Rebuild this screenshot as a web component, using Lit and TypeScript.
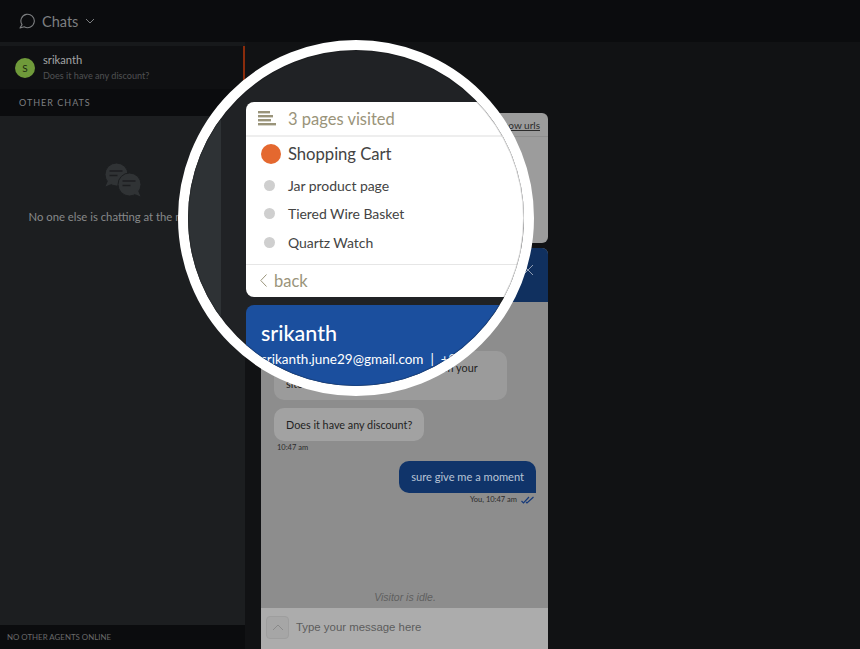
import { LitElement, html, css, svg } from "lit";
import { customElement } from "lit/decorators.js";

const chatGlyph = (cx: number, cy: number, flip: boolean) => svg`
  <circle cx=${cx} cy=${cy} r="11.5" fill="#303335" stroke="#1c1e20" stroke-width="1"></circle>
  <path d=${flip
    ? `M${cx + 4} ${cy + 9} L${cx + 11} ${cy + 12} L${cx + 8} ${cy + 5} Z`
    : `M${cx - 4} ${cy + 9} L${cx - 11} ${cy + 12} L${cx - 8} ${cy + 5} Z`} fill="#303335"></path>
  <path d="M${cx - 7} ${cy - 3.5} H${cx + 6} M${cx - 7} ${cy + 1} H${cx + 1}" stroke="#1c1e20" stroke-width="1.6"></path>
`;

@customElement("app-root")
export class AppRoot extends LitElement {
  static styles = css`
    :host {
      display: block;
      position: relative;
      width: 860px;
      height: 649px;
      overflow: hidden;
      background: #111214;
      font-family: "Lato", "Open Sans", sans-serif;
      color: #444;
    }
    .page { display: flex; flex-direction: column; height: 100%; }
    .top {
      height: 42px; flex: none; background: #0b0c0e;
      display: flex; align-items: center; padding-left: 19px; gap: 7px;
      color: #7d7f81; font-size: 14.5px;
    }
    .top svg { display: block; }
    .body { flex: 1; display: flex; min-height: 0; }
    .side { width: 245px; flex: none; display: flex; flex-direction: column; background: #1c1e20; }
    .strip { height: 4px; background: #17191b; }
    .active {
      height: 43px; box-sizing: border-box; background: #0f1012;
      border-right: 2px solid #8a2c0c;
      display: flex; align-items: center; gap: 8px; padding-left: 15px;
    }
    .avatar {
      width: 20px; height: 20px; border-radius: 50%; background: #6f9a3a;
      color: #1d2a10; font-size: 10px; display: flex; align-items: center; justify-content: center;
    }
    .who { display: flex; flex-direction: column; gap: 2px; }
    .name { font-size: 11.2px; line-height: 14px; color: #a3a4a5; }
    .preview { font-size: 9.1px; line-height: 13px; color: #4f5153; }
    .other {
      height: 27px; background: #0b0c0e; display: flex; align-items: center; padding-left: 19px;
      font-size: 9px; letter-spacing: 1px; color: #7d7f81;
    }
    .empty {
      flex: 1; display: flex; flex-direction: column; align-items: center; padding-top: 46px; gap: 12px;
      font-size: 11.3px; color: #87898a;
    }
    .agents {
      height: 24px; background: #0b0c0e; display: flex; align-items: center; padding-left: 7px;
      font-size: 7.9px; color: #69696a;
    }
    .main {
      flex: 1; padding: 71px 0 0 16px; display: flex; flex-direction: column; gap: 5px; min-width: 0;
    }
    .visited {
      width: 287px; height: 130px; flex: none; background: #9c9c9c; border-radius: 6px;
      box-sizing: border-box;
    }
    .visited-head {
      height: 23px; border-bottom: 1px solid #8f8f8f; display: flex; justify-content: flex-end;
      align-items: center; padding-right: 8px;
    }
    .urls { font-size: 10px; color: #2b2b2b; text-decoration: underline; }
    .win { width: 287px; flex: 1; display: flex; flex-direction: column; min-height: 0; background: #8d8d8d; border-radius: 6px 6px 0 0; overflow: hidden; }
    .win-head { height: 54px; flex: none; background: #10305f; display: flex; justify-content: flex-end; padding: 16px 14px 0 0; box-sizing: border-box; }
    .msgs { flex: 1; display: flex; flex-direction: column; padding: 49px 12px 4px 13px; min-height: 0; }
    .bubble {
      box-sizing: border-box; background: #a2a2a2; border-radius: 10px; padding: 8.5px 12px;
      font-size: 10.8px; line-height: 16px; color: #1f1f1f; width: fit-content;
    }
    .bubble.wide { width: 233px; background: #9b9b9b; margin-bottom: 8px; }
    .bubble.wide span { display: block; white-space: nowrap; }
    .time { font-size: 7.5px; line-height: 14px; color: #2c2c2c; padding-left: 3px; margin-bottom: 6px; }
    .bubble.me {
      align-self: flex-end; background: #10346a; color: #b9c4d6; border-bottom-right-radius: 0;
      font-size: 11.1px; padding: 8px 12px;
    }
    .sent { align-self: flex-end; display: flex; align-items: center; gap: 4px; font-size: 7.5px; line-height: 14px; color: #2c2c2c; padding-right: 2px; }
    .idle { margin-top: auto; text-align: center; font: italic 10.5px "Liberation Sans", sans-serif; color: #5f5f5f; line-height: 14px; }
    .input { height: 41px; flex: none; background: #acacac; display: flex; align-items: center; gap: 7px; padding-left: 5px; font: 11.4px "Liberation Sans", sans-serif; color: #5c5c5c; padding-bottom: 3px; box-sizing: border-box; }
    .up { width: 23px; height: 23px; box-sizing: border-box; border: 1px solid #9e9e9e; border-radius: 4px; background: #a6a6a6; display: flex; align-items: center; justify-content: center; }

    .lens {
      position: absolute; left: 178px; top: 40px; width: 356px; height: 356px; box-sizing: border-box;
      border: 10px solid #fff; border-radius: 50%; overflow: hidden; background: #202225;
      display: flex;
    }
    .lens::after {
      content: ""; position: absolute; inset: 0; border-radius: 50%;
      box-shadow: inset 0 0 0 1px rgba(0, 0, 0, 0.14);
    }
    .lens-side { width: 33px; flex: none; background: #2e3235; }
    .lens-main { flex: none; width: 400px; padding: 52px 0 0 25px; display: flex; flex-direction: column; gap: 8px; }
    .card { background: #fff; border-radius: 8px; height: 195px; flex: none; display: flex; flex-direction: column; }
    .card-head { height: 35px; flex: none; box-sizing: border-box; border-bottom: 2px solid #eee; display: flex; align-items: center; gap: 12px; padding-left: 12px; color: #9a947a; font-size: 16.5px; }
    .rows { flex: 1; display: flex; flex-direction: column; padding-top: 2px; }
    .row { display: flex; align-items: center; height: 28.5px; padding-left: 18px; gap: 13px; font-size: 14px; letter-spacing: -0.05px; color: #444; }
    .row i { width: 11px; height: 11px; border-radius: 50%; background: #cfcfcf; flex: none; }
    .row.now { height: 29px; padding-left: 15px; gap: 7px; font-size: 16.7px; margin-bottom: 3px; }
    .row.now i { width: 20px; height: 20px; background: #e4682f; }
    .card-foot { height: 33px; flex: none; box-sizing: border-box; border-top: 1px solid #e6e6e6; display: flex; align-items: center; gap: 7px; padding-left: 14px; padding-bottom: 1px; color: #9a947a; font-size: 16.5px; }
    .visitor { background: #1b4f9e; border-radius: 8px 8px 0 0; flex: 1; padding: 13px 15px; color: #fff; }
    .visitor-name { font-size: 21.5px; line-height: 30px; font-weight: 500; }
    .visitor-mail { font-size: 13.5px; line-height: 22px; white-space: nowrap; }
  `;

  render() {
    return html`
      <div class="page">
        <div class="top">
          <svg width="16" height="16" viewBox="0 0 16 16" fill="none" stroke="#7d7f81" stroke-width="1.1">
            <path d="M1 15 L3 11.6 A6.7 6.7 0 1 1 5.2 13.7 Z" stroke-linejoin="round"></path>
          </svg>
          <span>Chats</span>
          <svg width="10" height="6" viewBox="0 0 10 6" fill="none" stroke="#7d7f81" stroke-width="1"><path d="M1 1 L5 5 L9 1"></path></svg>
        </div>
        <div class="body">
          <aside class="side">
            <div class="strip"></div>
            <div class="active">
              <div class="avatar">S</div>
              <div class="who">
                <span class="name">srikanth</span>
                <span class="preview">Does it have any discount?</span>
              </div>
            </div>
            <div class="other">OTHER CHATS</div>
            <div class="empty">
              <svg width="38" height="36" viewBox="0 0 38 36">
                ${chatGlyph(12.5, 12.5, false)}
                ${chatGlyph(25.5, 22.5, true)}
              </svg>
              <span>No one else is chatting at the moment</span>
            </div>
            <div class="agents">NO OTHER AGENTS ONLINE</div>
          </aside>
          <main class="main">
            <section class="visited">
              <div class="visited-head"><span class="urls">show urls</span></div>
            </section>
            <section class="win">
              <div class="win-head">
                <svg width="12" height="12" viewBox="0 0 12 12" stroke="#8f9db3" stroke-width="1"><path d="M1 1 L11 11 M11 1 L1 11"></path></svg>
              </div>
              <div class="msgs">
                <div class="bubble wide"><span>Hi, I want to buy a product I saw on your</span><span>site.</span></div>
                <div class="bubble">Does it have any discount?</div>
                <div class="time">10:47 am</div>
                <div class="bubble me">sure give me a moment</div>
                <div class="sent">
                  <span>You, 10:47 am</span>
                  <svg width="13" height="8" viewBox="0 0 13 8" fill="none" stroke="#163a7a" stroke-width="1.2"><path d="M0.5 5 L2.5 7 L8 1 M5 6 L6 7 L12.5 1"></path></svg>
                </div>
                <div class="idle">Visitor is idle.</div>
              </div>
              <div class="input">
                <div class="up"><svg width="12" height="7" viewBox="0 0 12 7" fill="none" stroke="#8a8a8a" stroke-width="1"><path d="M1 6 L6 1 L11 6"></path></svg></div>
                <span>Type your message here</span>
              </div>
            </section>
          </main>
        </div>
      </div>

      <div class="lens">
        <div class="lens-side"></div>
        <div class="lens-main">
          <div class="card">
            <div class="card-head">
              <svg width="18" height="15" viewBox="0 0 18 15" fill="#9a947a"><rect x="0" y="0" width="12" height="2.4"></rect><rect x="0" y="4" width="15" height="2.4"></rect><rect x="0" y="8" width="13" height="2.4"></rect><rect x="0" y="12" width="18" height="2.4"></rect></svg>
              <span>3 pages visited</span>
            </div>
            <div class="rows">
              <div class="row now"><i></i><span>Shopping Cart</span></div>
              <div class="row"><i></i><span>Jar product page</span></div>
              <div class="row"><i></i><span>Tiered Wire Basket</span></div>
              <div class="row"><i></i><span>Quartz Watch</span></div>
            </div>
            <div class="card-foot">
              <svg width="7" height="13" viewBox="0 0 7 13" fill="none" stroke="#9a947a" stroke-width="1"><path d="M6.5 0.5 L0.8 6.5 L6.5 12.5"></path></svg>
              <span>back</span>
            </div>
          </div>
          <div class="visitor">
            <div class="visitor-name">srikanth</div>
            <div class="visitor-mail">srikanth.june29@gmail.com &nbsp;|&nbsp; +91 98765 43210</div>
          </div>
        </div>
      </div>
    `;
  }
}
